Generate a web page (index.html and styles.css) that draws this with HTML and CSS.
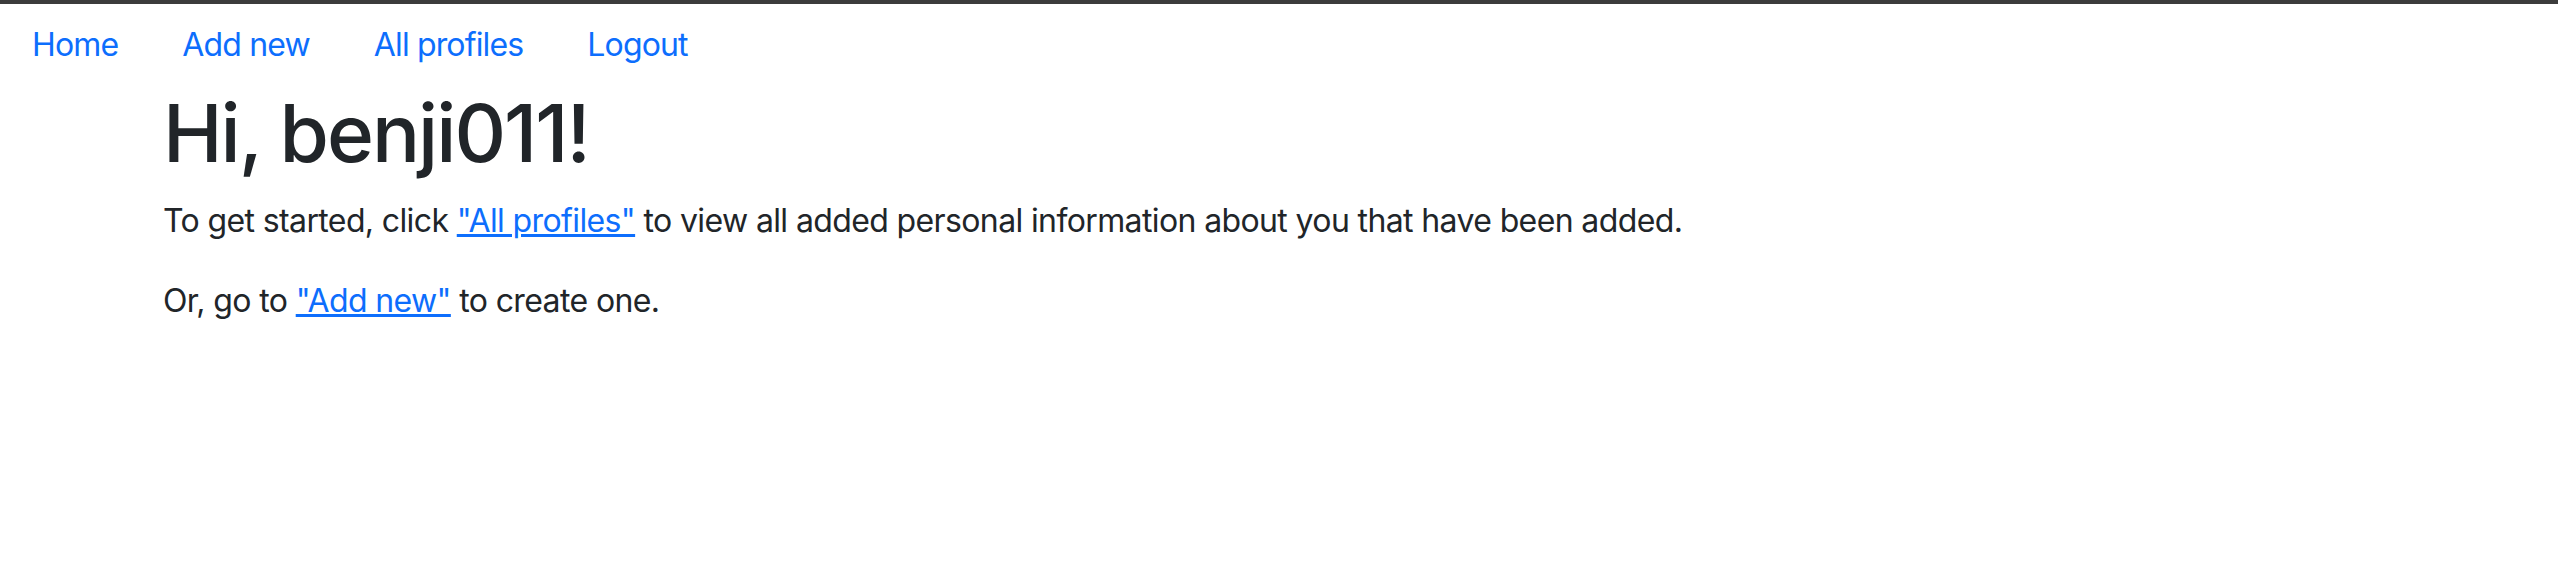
FILE: index.html
```html
<!DOCTYPE html>
<html lang="en">
<head>
<meta charset="utf-8">
<title>Home</title>
<link rel="stylesheet" href="styles.css">
</head>
<body>
<div class="topbar"></div>
<nav class="nav">
  <a class="nav-link" href="#">Home</a>
  <a class="nav-link" href="#">Add new</a>
  <a class="nav-link" href="#">All profiles</a>
  <a class="nav-link" href="#">Logout</a>
</nav>
<main class="container">
  <h1 class="title">Hi, benji011!</h1>
  <p class="text">To get started, click <a class="inline-link" href="#">"All profiles"</a> to view all added personal information about you that have been added.</p>
  <p class="text">Or, go to <a class="inline-link" href="#">"Add new"</a> to create one.</p>
</main>
</body>
</html>
```
FILE: styles.css
```css
*, *::before, *::after {
  box-sizing: border-box;
}
html, body {
  margin: 0;
  padding: 0;
  background: #fff;
}
body {
  font-family: Inter, "Liberation Sans", Arial, sans-serif;
  font-size: 32px;
  line-height: 1.5;
  letter-spacing: -0.62px;
  color: #212529;
}
.topbar {
  height: 4px;
  background: #3c3c3c;
}
.nav {
  display: flex;
  flex-wrap: wrap;
  padding-top: 1px;
}
.nav-link {
  display: block;
  padding: 16px 32px;
  color: #0d6efd;
  text-decoration: none;
  letter-spacing: -0.85px;
}
.container {
  max-width: 2280px;
  margin: 0 auto;
  padding: 0 24px;
}
.title {
  margin: 0 0 16px;
  font-size: 80px;
  font-weight: 500;
  line-height: 1.2;
  letter-spacing: -2px;
}
.text {
  margin: 0 0 32px;
}
.inline-link {
  color: #0d6efd;
  text-decoration: underline;
}
```
